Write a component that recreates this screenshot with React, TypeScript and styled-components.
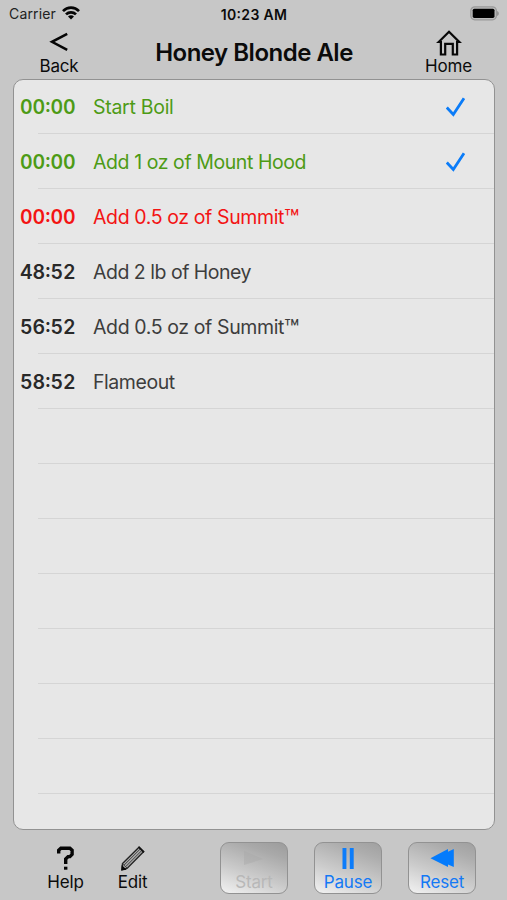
import React from "react";
import styled, { createGlobalStyle } from "styled-components";

const GlobalStyle = createGlobalStyle`
  * { box-sizing: border-box; }
  body { margin: 0; background: #c7c7c7; font-family: Inter, "Liberation Sans", sans-serif; }
`;

const Screen = styled.div`
  width: 507px;
  height: 900px;
  display: flex;
  flex-direction: column;
  background: #c7c7c7;
  color: #0b0b0b;
  overflow: hidden;
  white-space: nowrap;
`;

const StatusBar = styled.div`
  height: 28px;
  padding: 0 8px 0 9px;
  display: grid;
  grid-template-columns: 1fr auto 1fr;
  align-items: center;
  font-size: 14px;
`;

const Carrier = styled.div`
  display: flex;
  align-items: center;
  gap: 6px;
  height: 26px;
  padding-bottom: 2px;
  color: #222;
  letter-spacing: 0.15px;
`;

const Clock = styled.div`
  font-weight: 600;
  font-size: 14px;
  letter-spacing: 0.35px;
  font-feature-settings: "case" 1;
`;

const Battery = styled.svg`
  justify-self: end;
  margin-top: -2px;
`;

const Header = styled.header`
  height: 51px;
  display: grid;
  grid-template-columns: 118px 1fr 117px;
`;

const NavButton = styled.div`
  display: flex;
  flex-direction: column;
  align-items: center;
  svg { display: block; }
`;

const Label = styled.span`
  font-size: 17px;
  line-height: 20px;
  letter-spacing: -0.2px;
`;

const Title = styled.h1`
  margin: 0;
  text-align: center;
  font-size: 24px;
  line-height: 49px;
  font-weight: 600;
  letter-spacing: -0.5px;
`;

const Panel = styled.main`
  width: 482px;
  height: 751px;
  flex: none;
  margin-left: 13px;
  border: 1.5px solid #929292;
  border-radius: 10px;
  background: #e7e7e7;
  overflow: hidden;
`;

const Row = styled.div<{ $color?: string }>`
  height: 55px;
  padding: 0 28px 0 6px;
  display: grid;
  grid-template-columns: 73px 1fr 20px;
  align-items: center;
  color: ${(p) => p.$color ?? "#3d3d3d"};
  background: linear-gradient(#d5d5d5, #d5d5d5) 24px 100% / 100% 1px no-repeat;
  &:first-child { height: 54px; }
  &:last-child { background: none; }
`;

const Time = styled.span<{ $color: string }>`
  color: ${(p) => p.$color};
  font-size: 19.5px;
  font-weight: 600;
  font-variant-numeric: tabular-nums;
  font-feature-settings: "case" 1;
`;

const Step = styled.span<{ $spacing: number }>`
  font-size: 19.5px;
  letter-spacing: ${(p) => p.$spacing}px;
`;

const Trademark = styled.span`
  font-size: 25px;
  line-height: 0;
  vertical-align: -4px;
`;

const Footer = styled.footer`
  flex: 1;
  padding: 12px 31px 6px 43px;
  display: grid;
  grid-template-columns: 44px 46px 1fr auto;
  column-gap: 22px;
`;

const Tool = styled(NavButton)`
  padding: 3px 0 0 1px;
`;

const Controls = styled.div`
  display: flex;
  gap: 26px;
`;

const ControlButton = styled.button<{ $off?: boolean }>`
  width: 68px;
  height: 52px;
  padding: 4px 0 0;
  display: flex;
  flex-direction: column;
  align-items: center;
  border: 1.5px solid #929292;
  border-radius: 9px;
  font-family: inherit;
  color: ${(p) => (p.$off ? "#b8b8b8" : "#1479f5")};
  background: ${(p) => p.$off
    ? "linear-gradient(200deg, #9c9c9c 0%, #a9a9a9 22%, #cacaca 60%, #f2f2f2 100%)"
    : "linear-gradient(200deg, #a0a0a0 0%, #adadad 22%, #cccccc 60%, #f2f2f2 100%)"};
  svg { display: block; margin-top: -1px; }
`;

type Item = { time: string; text: string; color: string; timeColor: string; spacing: number; done?: boolean; trademark?: boolean };
const green = "#4d9b16";
const red = "#f31414";
const items: Item[] = [
  { time: "00:00", text: "Start Boil", color: green, timeColor: green, spacing: -0.28, done: true },
  { time: "00:00", text: "Add 1 oz of Mount Hood", color: green, timeColor: green, spacing: -0.42, done: true },
  { time: "00:00", text: "Add 0.5 oz of Summit", color: red, timeColor: red, spacing: -0.38, trademark: true },
  { time: "48:52", text: "Add 2 lb of Honey", color: "#3d3d3d", timeColor: "#292929", spacing: -0.49 },
  { time: "56:52", text: "Add 0.5 oz of Summit", color: "#3d3d3d", timeColor: "#292929", spacing: -0.38, trademark: true },
  { time: "58:52", text: "Flameout", color: "#3d3d3d", timeColor: "#292929", spacing: -0.45 },
];
const blankRows = Array.from({ length: 8 }, (_, i) => i);

const Check = () => (
  <svg width="20" height="20" viewBox="0 0 20 20" fill="none" stroke="#0b7cf8" strokeWidth="2.8">
    <path d="M.8 10.5 7.3 17.5 18 1.2" />
  </svg>
);

export default function App() {
  return (
    <>
      <GlobalStyle />
      <Screen>
        <StatusBar>
          <Carrier>
            Carrier
            <svg width="18" height="14" viewBox="0 0 18 14" fill="none" stroke="#050505" strokeWidth="2.7">
              <path d="M1 5.1C5.5.5 12.5.5 17 5.1M4 8.4c2.8-2.8 7.2-2.8 10 0" />
              <path d="m9 13.5-3-3.1c1.8-1.6 4.2-1.6 6 0Z" fill="#050505" stroke="none" />
            </svg>
          </Carrier>
          <Clock>10:23 AM</Clock>
          <Battery width="30" height="15" viewBox="0 0 30 15">
            <rect x="1.8" y=".8" width="25.6" height="13" rx="4" fill="#bcbcbc" stroke="#999" strokeWidth="1.2" />
            <rect x="3.7" y="2.7" width="21.8" height="9.2" rx="1.6" fill="#000" />
            <path d="M28.2 5c2 .7 2 4.2 0 5Z" fill="#898989" />
          </Battery>
        </StatusBar>
        <Header>
          <NavButton>
            <svg width="20" height="28" viewBox="0 0 20 28" fill="none" stroke="#050505" strokeWidth="2.5">
              <path d="M18.2 5.8 3 13.8l15.2 8" />
            </svg>
            <Label>Back</Label>
          </NavButton>
          <Title>Honey Blonde Ale</Title>
          <NavButton>
            <svg width="28" height="28" viewBox="0 0 28 28" fill="none" stroke="#080808" strokeWidth="2.2">
              <path d="M3.7 14 14 3.7 24.3 14h-2.2v12.5h-4.3V15.8h-7.6v10.7H5.9V14Z" />
            </svg>
            <Label>Home</Label>
          </NavButton>
        </Header>
        <Panel>
          {items.map((item) => (
            <Row key={item.time + item.text} $color={item.color}>
              <Time $color={item.timeColor}>{item.time}</Time>
              <Step $spacing={item.spacing}>
                {item.text}
                {item.trademark && <Trademark>™</Trademark>}
              </Step>
              {item.done && <Check />}
            </Row>
          ))}
          {blankRows.map((row) => <Row key={row} />)}
        </Panel>
        <Footer>
          <Tool>
            <svg width="20" height="27" viewBox="0 0 20 27" fill="none" stroke="#050505" strokeWidth="3.4">
              <path d="M2.7 8.5V5.2l2.2-2h9l2.2 2v4.2l-2.2 2.2h-1.8L9.7 14v5" />
              <path d="M9.7 21.7v3" />
            </svg>
            <Label>Help</Label>
          </Tool>
          <Tool>
            <svg width="28" height="27" viewBox="0 0 28 27">
              <path d="m3 24.8.5-6.3L20 2.2l4.5 4.5L8.3 23.2Z" fill="#aaa" stroke="#242424" strokeWidth="1.4" />
              <path d="M5.2 20 21.3 3.9M6.8 21.5 22.9 5.4M3.4 18.8l4.9 4.4" fill="none" stroke="#333" strokeWidth=".9" />
              <path d="m2.2 25.5.5-5.5 5 4.7Z" fill="#080808" />
              <path d="m19 2.3 1.2-1.1 5.4 5.3-1.2 1.6Z" fill="#111" />
            </svg>
            <Label>Edit</Label>
          </Tool>
          <span />
          <Controls>
            <ControlButton $off>
              <svg width="28" height="26" viewBox="0 0 28 26"><path d="m4 5 19 8-19 6Z" fill="#a8a8a8" opacity=".45" /></svg>
              <Label>Start</Label>
            </ControlButton>
            <ControlButton>
              <svg width="28" height="26" viewBox="0 0 28 26"><path d="M8.5 2h3.9v21H8.5zm7.3 0h3.9v21h-3.9z" fill="#0c7cfa" /></svg>
              <Label>Pause</Label>
            </ControlButton>
            <ControlButton>
              <svg width="28" height="26" viewBox="0 0 28 26"><path d="M2.5 12.2 20 3.1v2.6l5.8-2.6v18L20 18.5v2.6Z" fill="#047bfc" /></svg>
              <Label>Reset</Label>
            </ControlButton>
          </Controls>
        </Footer>
      </Screen>
    </>
  );
}
